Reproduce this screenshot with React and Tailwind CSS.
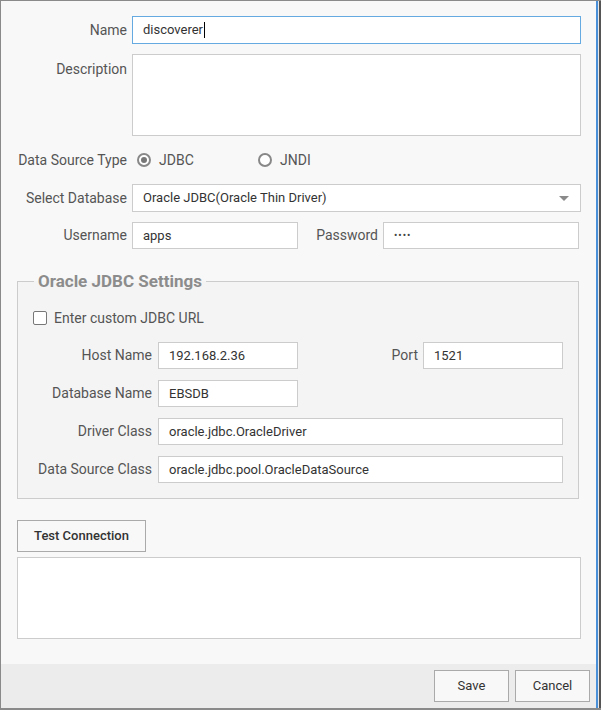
import React from 'react'

function Field({ label, children, labelTop = false, className = '' }) {
  return (
    <div className={`flex ${labelTop ? 'items-start' : 'items-center'} ${className}`}>
      <div className={`w-[131px] shrink-0 text-right pr-[5px] ${labelTop ? 'pt-[5px]' : ''}`}>
        {label}
      </div>
      {children}
    </div>
  )
}

function TextBox({ value, className = '' }) {
  return (
    <div className={`flex items-center bg-white border border-[#cccccc] px-[10px] text-[13px] text-[#333] whitespace-nowrap overflow-hidden ${className}`}>
      {value}
    </div>
  )
}

function Radio({ checked, label, className = '' }) {
  return (
    <div className={`flex items-center ${className}`}>
      <span className="w-[14px] h-[14px] rounded-full border-2 border-[#888] flex items-center justify-center bg-white">
        {checked && <span className="w-[6px] h-[6px] rounded-full bg-[#777]" />}
      </span>
      <span className="ml-[8px] text-[#555]">{label}</span>
    </div>
  )
}

export default function App() {
  return (
    <div className="w-[601px] h-[710px] flex bg-[#f8f8f8] text-[14px] text-[#555] border-t border-l border-b-2 border-[#8a8a8a]" style={{ fontFamily: 'Roboto, "Liberation Sans", sans-serif' }}>
      <div className="w-[595px] flex flex-col">
        <div className="flex-1 pt-[15px]">
          <Field label="Name">
            <div className="w-[449px] h-[28px] flex items-center bg-white border border-[#66aae2] px-[10px] text-[13px] text-[#333]">
              discoverer
              <span className="inline-block w-[1px] h-[16px] bg-black ml-[1px]" />
            </div>
          </Field>

          <Field label="Description" labelTop className="mt-[10px]">
            <div className="w-[449px] h-[82px] bg-white border border-[#cccccc]" />
          </Field>

          <Field label="Data Source Type" className="mt-[10px] h-[28px]">
            <Radio checked label="JDBC" className="ml-[5px] w-[121px]" />
            <Radio label="JNDI" />
          </Field>

          <Field label="Select Database" className="mt-[10px]">
            <div className="w-[449px] h-[28px] flex items-center justify-between bg-white border border-[#cccccc] pl-[10px] pr-[11px] text-[13px] text-[#333]">
              <span>Oracle JDBC(Oracle Thin Driver)</span>
              <svg width="10" height="5" viewBox="0 0 10 5">
                <path d="M0 0 L10 0 L5 5 Z" fill="#8a8a8a" />
              </svg>
            </div>
          </Field>

          <Field label="Username" className="mt-[10px]">
            <TextBox value="apps" className="w-[166px] h-[27px]" />
            <div className="w-[85px] text-right pr-[5px]">Password</div>
            <TextBox value={<span className="text-[10px] tracking-[1px] text-[#444]">••••</span>} className="w-[196px] h-[27px]" />
          </Field>

          <fieldset className="mt-[22px] ml-[16px] w-[562px] border border-[#cccccc] bg-[#f4f4f4] pb-[15px]">
            <legend className="ml-[16px] px-[4px] text-[17px] leading-[20px] font-bold text-[#8c8c8c]">Oracle JDBC Settings</legend>
            <div className="flex items-center mt-[17px] ml-[15px] h-[20px]">
              <span className="w-[14px] h-[14px] rounded-[2px] border border-[#777] bg-white" />
              <span className="ml-[7px]">Enter custom JDBC URL</span>
            </div>
            <div className="flex items-center mt-[14px]">
              <div className="w-[140px] text-right pr-[6px]">Host Name</div>
              <TextBox value="192.168.2.36" className="w-[140px] h-[27px]" />
              <div className="w-[125px] text-right pr-[5px]">Port</div>
              <TextBox value="1521" className="w-[140px] h-[27px]" />
            </div>
            <div className="flex items-center mt-[11px]">
              <div className="w-[140px] text-right pr-[6px]">Database Name</div>
              <TextBox value="EBSDB" className="w-[140px] h-[27px]" />
            </div>
            <div className="flex items-center mt-[11px]">
              <div className="w-[140px] text-right pr-[6px]">Driver Class</div>
              <TextBox value="oracle.jdbc.OracleDriver" className="w-[405px] h-[27px]" />
            </div>
            <div className="flex items-center mt-[11px]">
              <div className="w-[140px] text-right pr-[6px]">Data Source Class</div>
              <TextBox value="oracle.jdbc.pool.OracleDataSource" className="w-[405px] h-[27px]" />
            </div>
          </fieldset>

          <button type="button" className="mt-[21px] ml-[16px] w-[129px] h-[32px] border border-[#aaaaaa] bg-[#f8f8f8] text-[13px] text-[#333] font-medium">
            Test Connection
          </button>
          <div className="mt-[5px] ml-[16px] w-[564px] h-[82px] bg-white border border-[#cccccc]" />
        </div>

        <div className="h-[44px] bg-[#ececec] flex items-start justify-end gap-[6px] pt-[6px] pr-[6px]">
          <button type="button" className="w-[75px] h-[32px] border border-[#aaaaaa] bg-[#f8f8f8] text-[13px] text-[#333]">Save</button>
          <button type="button" className="w-[75px] h-[32px] border border-[#aaaaaa] bg-[#f8f8f8] text-[13px] text-[#333]">Cancel</button>
        </div>
      </div>
      <div className="w-[2px] bg-[#4a90d9]" />
      <div className="w-[1px] bg-[#e8e8e8]" />
      <div className="w-[2px] bg-[#555]" />
    </div>
  )
}
